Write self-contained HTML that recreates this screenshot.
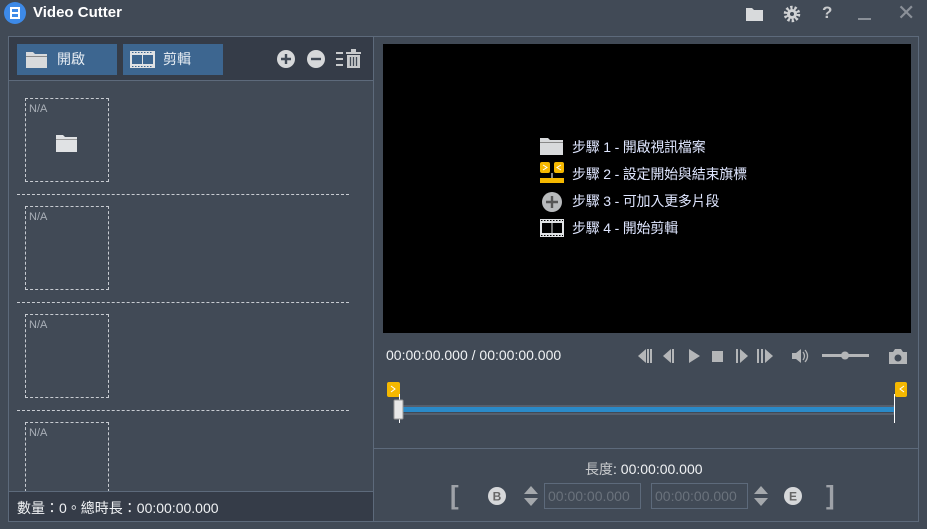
<!DOCTYPE html><html><head><meta charset="utf-8"><style>
*{margin:0;padding:0;box-sizing:border-box}
body{width:927px;height:529px;background:#414a56;font-family:"Liberation Sans","Noto Sans CJK TC",sans-serif;position:relative;overflow:hidden;color:#fff}
.a{position:absolute}
.btn{background:#3d6690;height:31px;top:44px;font-size:14px;color:#e8eef4;line-height:31px}
.slot{position:absolute;left:25px;width:84px;height:84px;border:1px dashed #c8ccd2;font-size:11px;color:#aab0b8;padding:4px 3px}
.sep{position:absolute;left:17px;width:332px;border-top:1px dashed #c8ccd2}
.step{position:absolute;left:572px;font-size:14px;color:#dfe6ff;letter-spacing:-0.2px}
</style></head><body>
<svg class="a" style="left:4px;top:2px" width="22" height="22"><circle cx="11" cy="11" r="11" fill="#3d8ae8"/><rect x="6" y="5" width="10" height="12" fill="#fff"/><rect x="8" y="7" width="6" height="3" fill="#3d8ae8"/><rect x="8" y="12" width="6" height="3" fill="#3d8ae8"/></svg>
<div class="a" style="left:33px;top:4px;font-size:15px;font-weight:bold">Video Cutter</div>
<svg class="a" style="left:745px;top:6px" width="20" height="16"><path d="M1 2h6l2 2h9v11H1z" fill="#d8dadc"/></svg>
<svg class="a" style="left:783px;top:5px" width="18" height="18"><circle cx="9" cy="9" r="6.5" fill="none" stroke="#d0d2d4" stroke-width="3.5" stroke-dasharray="2.3 1.8"/><circle cx="9" cy="9" r="5" fill="#d0d2d4"/><circle cx="9" cy="9" r="2" fill="#414a56"/></svg>
<div class="a" style="left:822px;top:3px;font-size:17px;font-weight:bold;color:#c8cacc">?</div>
<div class="a" style="left:858px;top:18px;width:13px;height:2px;background:#8a9098"></div>
<div class="a" style="left:897px;top:0;font-size:22px;color:#8a9098">✕</div>

<div class="a" style="left:8px;top:36px;width:366px;height:486px;border:1px solid #5d6a7b"></div>
<div class="a" style="left:9px;top:37px;width:364px;height:44px;background:#353c48;border-bottom:1px solid #5d6a7b"></div>
<div class="a btn" style="left:17px;width:100px"><svg class="a" style="left:9px;top:7px" width="22" height="17"><path d="M0 1h7l2 2h12v14H0z" fill="#d8dadc"/><rect x="0" y="5" width="21" height="1" fill="#888"/></svg><span style="position:absolute;left:40px">開啟</span></div>
<div class="a btn" style="left:123px;width:100px"><svg class="a" style="left:7px;top:7px" width="25" height="17"><rect x="0" y="0" width="25" height="17" fill="#e0e2e4"/><rect x="2" y="4" width="10" height="9" fill="#3d6690"/><rect x="13" y="4" width="10" height="9" fill="#3d6690"/><path d="M2 1.5h21M2 15.5h21" stroke="#3d6690" stroke-dasharray="1.5 1.5"/></svg><span style="position:absolute;left:40px">剪輯</span></div>
<svg class="a" style="left:276px;top:49px" width="20" height="20"><circle cx="10" cy="10" r="9" fill="#d6d8da"/><path d="M10 5v10M5 10h10" stroke="#414a56" stroke-width="2.4"/></svg>
<svg class="a" style="left:306px;top:49px" width="20" height="20"><circle cx="10" cy="10" r="9" fill="#d6d8da"/><path d="M5 10h10" stroke="#414a56" stroke-width="2.4"/></svg>
<svg class="a" style="left:336px;top:49px" width="28" height="20"><path d="M0 4h7M0 10h7M0 16h7" stroke="#c8cacc" stroke-width="2"/><rect x="10" y="3" width="15" height="2" fill="#c8cacc"/><rect x="15" y="0" width="5" height="3" fill="#c8cacc"/><rect x="11" y="6" width="13" height="13" fill="#c8cacc"/><path d="M14.5 8v9M17.5 8v9M20.5 8v9" stroke="#414a56" stroke-width="1.3"/></svg>
<div class="slot" style="top:98px">N/A<svg class="a" style="left:30px;top:36px" width="22" height="17"><path d="M0 0h7l2 2h12v15H0z" fill="#e0e2e4"/><rect y="4" width="21" height="1" fill="#999"/></svg></div>
<div class="sep" style="top:194px"></div>
<div class="slot" style="top:206px">N/A</div>
<div class="sep" style="top:302px"></div>
<div class="slot" style="top:314px">N/A</div>
<div class="sep" style="top:410px"></div>
<div class="slot" style="top:422px;height:70px;border-bottom:none">N/A</div>
<div class="a" style="left:9px;top:491px;width:364px;height:30px;background:#353c48;border-top:1px solid #5d6a7b;font-size:14px;color:#f0f2f4;padding:6px 0 0 8px">數量：0。總時長：00:00:00.000</div>

<div class="a" style="left:373px;top:36px;width:546px;height:486px;border:1px solid #5d6a7b"></div>
<div class="a" style="left:383px;top:44px;width:528px;height:289px;background:#000"></div>
<svg class="a" style="left:540px;top:137px" width="24" height="18"><path d="M0 1h8l2 2h13v15H0z" fill="#d8dadc"/><rect y="5" width="23" height="1" fill="#888"/></svg>
<div class="step" style="top:137px">步驟 1 - 開啟視訊檔案</div>
<svg class="a" style="left:540px;top:162px" width="24" height="22"><rect x="0" y="0" width="10" height="11" rx="2" fill="#f5b800"/><rect x="14" y="0" width="10" height="11" rx="2" fill="#f5b800"/><path d="M3 3l4 2.5-4 2.5M21 3l-4 2.5 4 2.5" stroke="#fff" fill="none"/><rect x="11" y="11" width="2" height="6" fill="#888"/><rect x="0" y="16" width="24" height="5" fill="#f5b800"/></svg>
<div class="step" style="top:164px">步驟 2 - 設定開始與結束旗標</div>
<svg class="a" style="left:541px;top:191px" width="22" height="22"><circle cx="11" cy="11" r="10" fill="#b8babc"/><path d="M11 5v12M5 11h12" stroke="#555" stroke-width="2.4"/></svg>
<div class="step" style="top:191px">步驟 3 - 可加入更多片段</div>
<svg class="a" style="left:540px;top:219px" width="24" height="18"><rect width="24" height="18" fill="#e0e2e4"/><rect x="2" y="4" width="9.5" height="10" fill="#000"/><rect x="12.5" y="4" width="9.5" height="10" fill="#000"/><path d="M1 1.5h22M1 16.5h22" stroke="#000" stroke-dasharray="1.5 1.5"/></svg>
<div class="step" style="top:218px">步驟 4 - 開始剪輯</div>

<div class="a" style="left:386px;top:347px;font-size:14px;color:#f0f2f4">00:00:00.000 / 00:00:00.000</div>
<svg class="a" style="left:636px;top:346px" width="280" height="20" fill="#b4b6b8">
<path d="M2 10l8-7v14z"/><rect x="11" y="3" width="2" height="14"/><rect x="14" y="3" width="2" height="14"/>
<path d="M27 10l8-7v14z"/><rect x="36" y="3" width="2" height="14"/>
<path d="M53 3l11 7-11 7z"/>
<rect x="76" y="5" width="11" height="11"/>
<rect x="100" y="3" width="2" height="14"/><path d="M104 3l8 7-8 7z"/>
<rect x="121" y="3" width="2" height="14"/><rect x="125" y="3" width="2" height="14"/><path d="M129 3l8 7-8 7z"/>
<path d="M156 7h4l5-4v14l-5-4h-4z"/><path d="M167 6q3 4 0 8M169 4q5 6 0 12" stroke="#b4b6b8" fill="none" stroke-width="1.3"/>
<rect x="186" y="8" width="47" height="3"/><circle cx="209" cy="9.5" r="4"/>
<path d="M253 6h4l2-3h6l2 3h4v12h-18z"/><circle cx="262" cy="12" r="3.5" fill="#414a56"/>
</svg>
<svg class="a" style="left:385px;top:380px" width="525" height="45">
<rect x="2" y="2" width="13" height="15" rx="2" fill="#f5b800"/><path d="M6 6l4 3-4 3" stroke="#fff" fill="none"/>
<rect x="510" y="2" width="12" height="15" rx="2" fill="#f5b800"/><path d="M519 6l-4 3 4 3" stroke="#fff" fill="none"/>
<rect x="14" y="26" width="495" height="8" fill="none" stroke="#6a7482"/>
<rect x="14" y="27" width="495" height="5" fill="#2a8ac8"/>
<rect x="14" y="14" width="1" height="29" fill="#fff"/><rect x="509" y="14" width="1" height="29" fill="#fff"/>
<rect x="9" y="20" width="9" height="19" rx="1" fill="#e8e8e8" stroke="#999"/>
</svg>
<div class="a" style="left:374px;top:448px;width:544px;border-top:1px solid #5d6a7b"></div>
<div class="a" style="left:585px;top:459px;font-size:14px;color:#f0f2f4"><span style="color:#c8cacc">長度</span>: 00:00:00.000</div>
<div class="a" style="left:450px;top:480px;font-size:26px;font-weight:bold;color:#9ea2a8">[</div>
<div class="a" style="left:826px;top:480px;font-size:26px;font-weight:bold;color:#9ea2a8">]</div>
<svg class="a" style="left:487px;top:486px" width="20" height="20"><circle cx="10" cy="10" r="9" fill="#d6d8da"/><text x="10" y="14.5" font-size="12" font-weight="bold" text-anchor="middle" fill="#666" font-family="Liberation Sans">B</text></svg>
<svg class="a" style="left:783px;top:486px" width="20" height="20"><circle cx="10" cy="10" r="9" fill="#d6d8da"/><text x="10" y="14.5" font-size="12" font-weight="bold" text-anchor="middle" fill="#666" font-family="Liberation Sans">E</text></svg>
<svg class="a" style="left:522px;top:484px" width="18" height="24" fill="#a4a8ac"><path d="M2 10l7-8 7 8zM2 14l7 8 7-8z"/></svg>
<svg class="a" style="left:752px;top:484px" width="18" height="24" fill="#a4a8ac"><path d="M2 10l7-8 7 8zM2 14l7 8 7-8z"/></svg>
<div class="a" style="left:544px;top:483px;width:97px;height:26px;border:1px solid #5d6a7b;font-size:14px;color:#6a727c;padding:4px 0 0 3px">00:00:00.000</div>
<div class="a" style="left:651px;top:483px;width:97px;height:26px;border:1px solid #5d6a7b;font-size:14px;color:#6a727c;padding:4px 0 0 3px">00:00:00.000</div>
</body></html>
